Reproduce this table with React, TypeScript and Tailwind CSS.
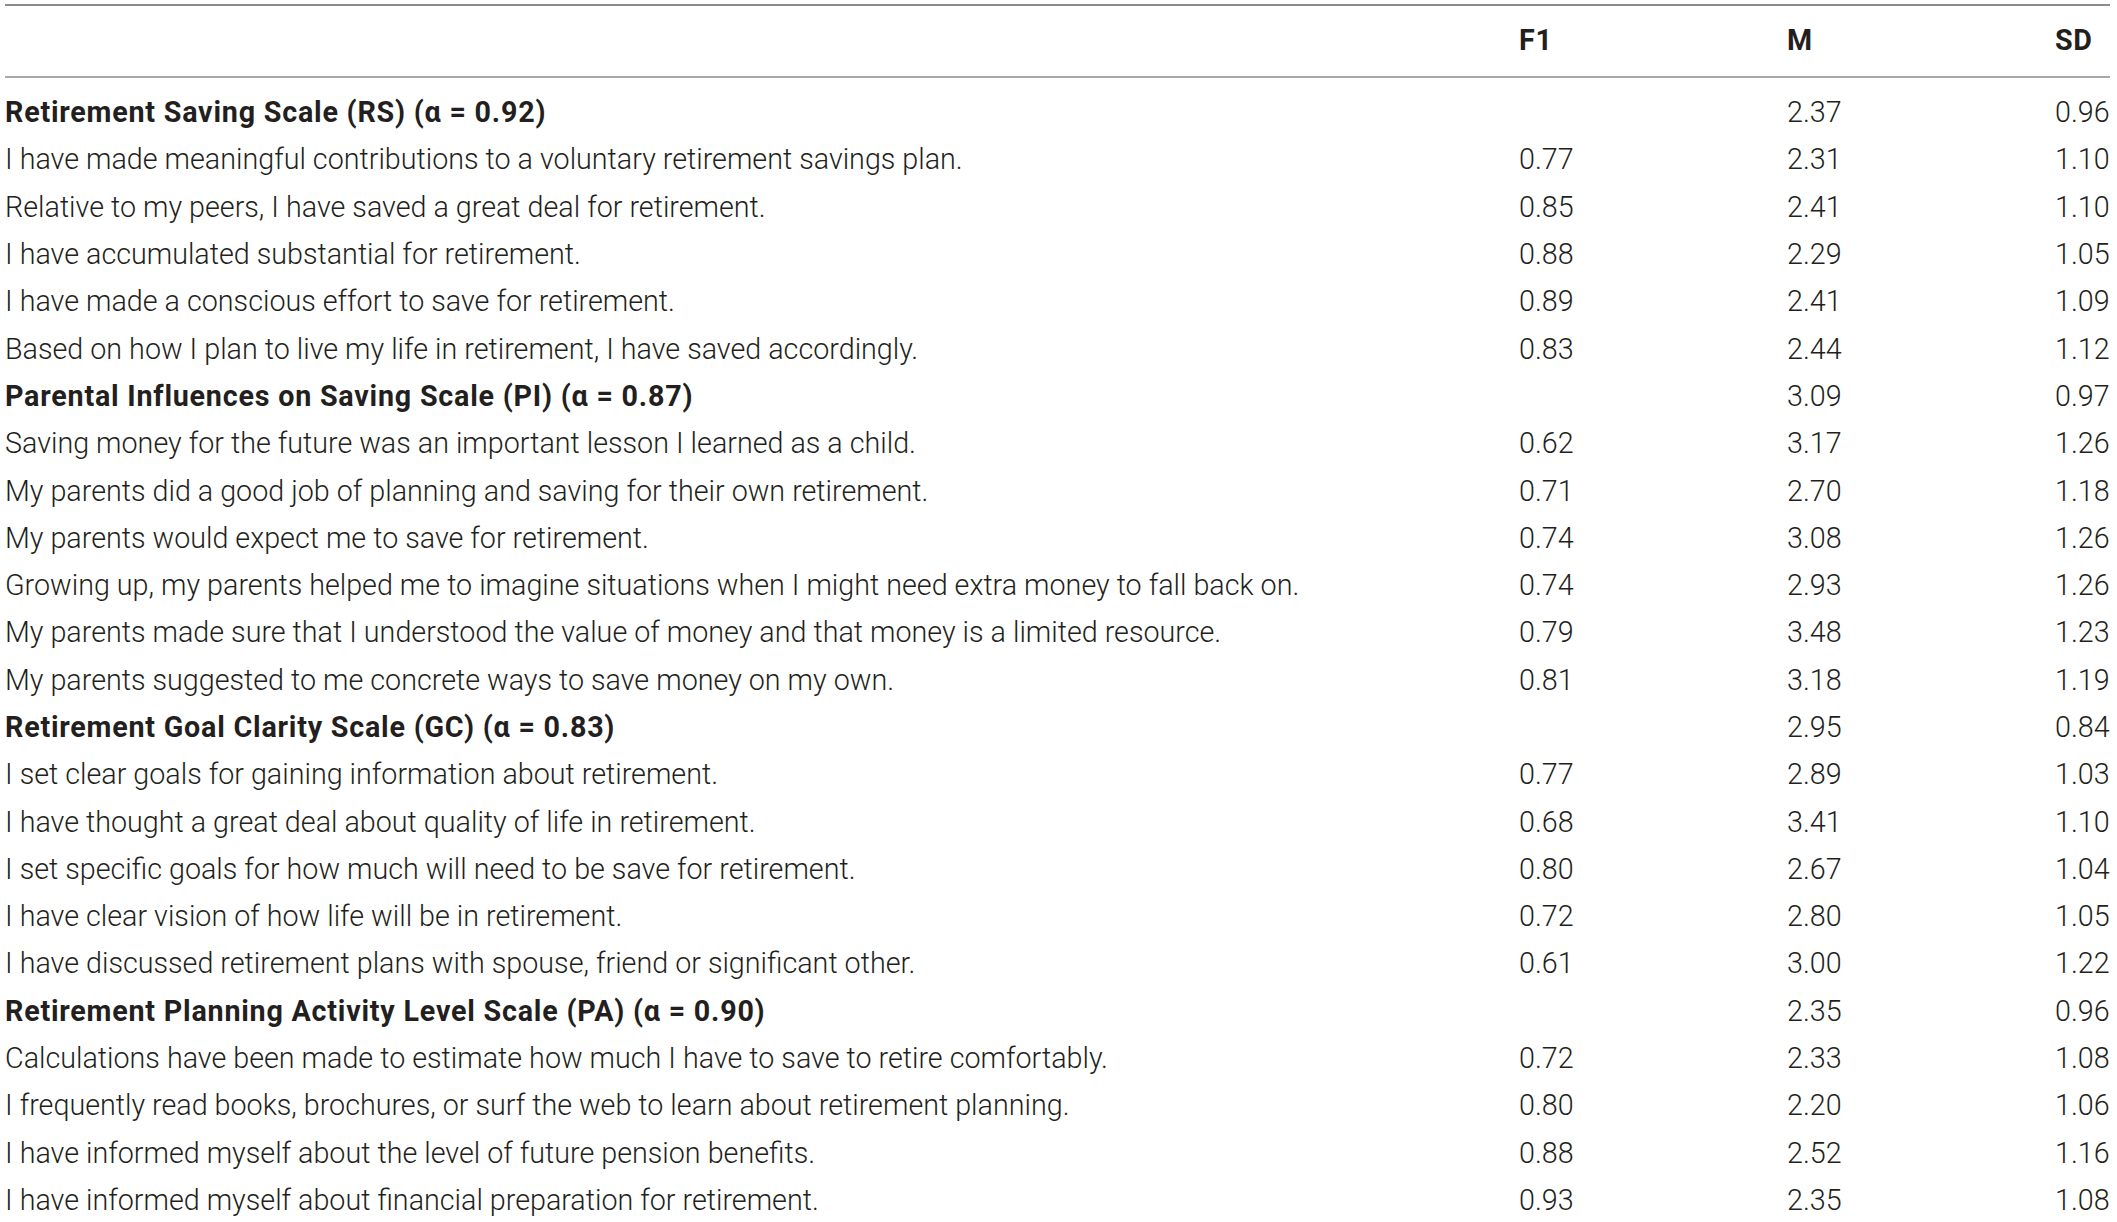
import React from "react";

type Row = { label: string; f1?: string; m: string; sd: string; head?: boolean };

const rows: Row[] = [
  { label: "Retirement Saving Scale (RS) (α = 0.92)", m: "2.37", sd: "0.96", head: true },
  { label: "I have made meaningful contributions to a voluntary retirement savings plan.", f1: "0.77", m: "2.31", sd: "1.10" },
  { label: "Relative to my peers, I have saved a great deal for retirement.", f1: "0.85", m: "2.41", sd: "1.10" },
  { label: "I have accumulated substantial for retirement.", f1: "0.88", m: "2.29", sd: "1.05" },
  { label: "I have made a conscious effort to save for retirement.", f1: "0.89", m: "2.41", sd: "1.09" },
  { label: "Based on how I plan to live my life in retirement, I have saved accordingly.", f1: "0.83", m: "2.44", sd: "1.12" },
  { label: "Parental Influences on Saving Scale (PI) (α = 0.87)", m: "3.09", sd: "0.97", head: true },
  { label: "Saving money for the future was an important lesson I learned as a child.", f1: "0.62", m: "3.17", sd: "1.26" },
  { label: "My parents did a good job of planning and saving for their own retirement.", f1: "0.71", m: "2.70", sd: "1.18" },
  { label: "My parents would expect me to save for retirement.", f1: "0.74", m: "3.08", sd: "1.26" },
  { label: "Growing up, my parents helped me to imagine situations when I might need extra money to fall back on.", f1: "0.74", m: "2.93", sd: "1.26" },
  { label: "My parents made sure that I understood the value of money and that money is a limited resource.", f1: "0.79", m: "3.48", sd: "1.23" },
  { label: "My parents suggested to me concrete ways to save money on my own.", f1: "0.81", m: "3.18", sd: "1.19" },
  { label: "Retirement Goal Clarity Scale (GC) (α = 0.83)", m: "2.95", sd: "0.84", head: true },
  { label: "I set clear goals for gaining information about retirement.", f1: "0.77", m: "2.89", sd: "1.03" },
  { label: "I have thought a great deal about quality of life in retirement.", f1: "0.68", m: "3.41", sd: "1.10" },
  { label: "I set specific goals for how much will need to be save for retirement.", f1: "0.80", m: "2.67", sd: "1.04" },
  { label: "I have clear vision of how life will be in retirement.", f1: "0.72", m: "2.80", sd: "1.05" },
  { label: "I have discussed retirement plans with spouse, friend or significant other.", f1: "0.61", m: "3.00", sd: "1.22" },
  { label: "Retirement Planning Activity Level Scale (PA) (α = 0.90)", m: "2.35", sd: "0.96", head: true },
  { label: "Calculations have been made to estimate how much I have to save to retire comfortably.", f1: "0.72", m: "2.33", sd: "1.08" },
  { label: "I frequently read books, brochures, or surf the web to learn about retirement planning.", f1: "0.80", m: "2.20", sd: "1.06" },
  { label: "I have informed myself about the level of future pension benefits.", f1: "0.88", m: "2.52", sd: "1.16" },
  { label: "I have informed myself about financial preparation for retirement.", f1: "0.93", m: "2.35", sd: "1.08" },
];

export default function App() {
  return (
    <div className="w-[2117px] h-[1222px] bg-white pl-[5px] pt-[4px] text-[#231f20] font-['Roboto',Arial,sans-serif] font-light text-[28.7px] overflow-hidden">
      <div className="w-[2105px]">
        <div className="h-[2px] bg-[#8c8c8c]" />
        <div className="flex items-center h-[70px] font-bold tracking-[0.7px]">
          <div className="w-[1514px]"></div>
          <div className="w-[268px]">F1</div>
          <div className="w-[268px]">M</div>
          <div className="flex-1">SD</div>
        </div>
        <div className="h-[2px] bg-[#a8a8a8]" />
        <div className="pt-[11px]">
          {rows.map((r, i) => (
            <div key={i} className="flex items-center h-[47.3px] whitespace-nowrap">
              <div className={`w-[1514px] ${r.head ? "font-bold tracking-[0.78px]" : ""}`}>{r.label}</div>
              <div className="w-[268px]">{r.f1 ?? ""}</div>
              <div className="w-[268px]">{r.m}</div>
              <div className="flex-1">{r.sd}</div>
            </div>
          ))}
        </div>
      </div>
    </div>
  );
}
